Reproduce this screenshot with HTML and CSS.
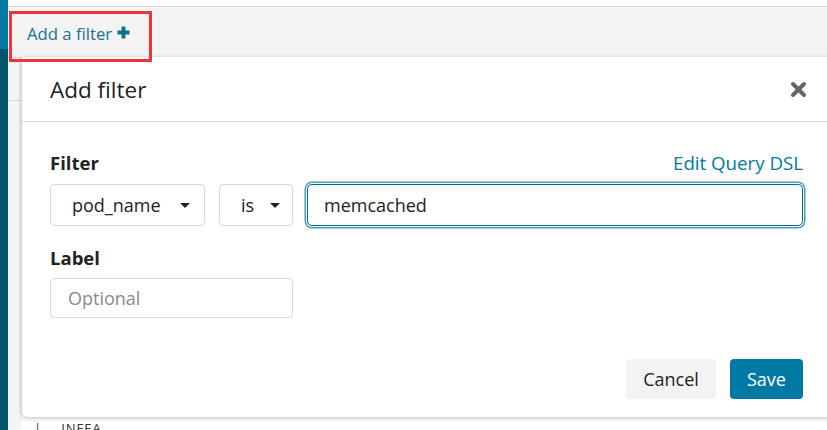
FILE: index.html
```html
<!DOCTYPE html>
<html>
<head>
<meta charset="utf-8">
<link rel="stylesheet" href="styles.css">
</head>
<body>
<div class="app">
  <div class="sidenav">
    <div class="sidenav-top"></div>
    <div class="sidenav-rest"></div>
  </div>
  <div class="main">
    <div class="topgap"></div>
    <div class="filterbar">
      <a class="add-filter">Add a filter
        <svg class="plus" width="13" height="13" viewBox="0 0 13 13"><path d="M6.5 0.5v12M0.5 6.5h12" stroke="currentColor" stroke-width="3.8"/></svg>
      </a>
    </div>
    <div class="content">
      <div class="leftcol"><div class="leftcol-head"></div></div>
      <div class="rest">
        <div class="bottom-row"><span class="tick">|</span><span class="frag">INFEA</span></div>
      </div>
    </div>

    <div class="modal">
      <div class="modal-header">
        <div class="modal-title">Add filter</div>
        <svg class="close" width="17" height="17" viewBox="0 0 17 17"><path d="M3 3l11 11M14 3L3 14" stroke="#666" stroke-width="4" stroke-linecap="round"/></svg>
      </div>
      <div class="modal-body">
        <div class="label-row">
          <span class="field-label">Filter</span>
          <a class="dsl-link">Edit Query DSL</a>
        </div>
        <div class="controls">
          <div class="select select-field"><span>pod_name</span><span class="caret"></span></div>
          <div class="select select-op"><span>is</span><span class="caret"></span></div>
          <div class="input input-focus">memcached</div>
        </div>
        <div class="label-row label2">
          <span class="field-label">Label</span>
        </div>
        <div class="input input-label placeholder">Optional</div>
      </div>
      <div class="modal-footer">
        <button class="btn btn-cancel">Cancel</button>
        <button class="btn btn-save">Save</button>
      </div>
    </div>
    <div class="highlight"></div>
  </div>
</div>
</body>
</html>
```
FILE: styles.css
```css
* { box-sizing: border-box; }
html, body {
  margin: 0;
  height: 430px;
  overflow: hidden;
  font-family: "Open Sans", "Liberation Sans", sans-serif;
  color: #222;
  background: #fff;
}
.app { display: flex; height: 430px; }
.sidenav { width: 8px; display: flex; flex-direction: column; }
.sidenav-top { height: 49px; background: #0079a5; }
.sidenav-rest { flex: 1; background: #005571; }
.main { flex: 1; position: relative; display: flex; flex-direction: column; }
.topgap { height: 6px; }
.filterbar {
  height: 52px;
  background: #f3f3f3;
  border-top: 1px solid #d9d9d9;
  border-bottom: 1px solid #d9d9d9;
  display: flex;
  align-items: center;
  padding: 2px 0 0 19px;
}
.add-filter {
  font-size: 16.7px;
  color: #1a7193;
  display: flex;
  align-items: center;
  gap: 5px;
}
.plus { color: #0a6f91; margin-top: -1px; }
.highlight {
  position: absolute;
  left: 1px;
  top: 11px;
  width: 143px;
  height: 51px;
  border: 3px solid #ee3438;
  z-index: 5;
}
.content { flex: 1; display: flex; }
.leftcol { width: 14px; background: #f5f5f5; }
.leftcol-head { height: 43px; border-bottom: 1px solid #d9d9d9; }
.rest { flex: 1; display: flex; flex-direction: column; justify-content: flex-end; }
.bottom-row { height: 8px; overflow: visible; padding-left: 12px; font-size: 13px; line-height: 13px; display: flex; gap: 20px; color: #333; }
.frag { letter-spacing: 1px; }

.modal {
  position: absolute;
  left: 14px;
  top: 57px;
  width: 809px;
  background: #fff;
  border-radius: 0 0 0 6px;
  box-shadow: -1px 1px 4px rgba(0,0,0,0.18), 0 2px 6px rgba(0,0,0,0.08);
}
.modal-header {
  height: 65px;
  border-bottom: 1px solid #d9d9d9;
  display: flex;
  align-items: center;
  justify-content: space-between;
  padding: 0 24px 0 28px;
}
.modal-title { font-size: 22.5px; color: #1f1f1f; }
.modal-body { padding: 29px 28px 0 28px; }
.label-row {
  display: flex;
  justify-content: space-between;
  align-items: center;
  height: 22px;
}
.field-label { font-weight: 700; font-size: 18.5px; color: #222; }
.dsl-link { font-size: 18.7px; color: #0079a5; }
.controls { display: flex; gap: 14px; margin-top: 11px; }
.select {
  height: 42px;
  border: 1px solid #d9d9d9;
  border-radius: 4px;
  display: flex;
  align-items: center;
  justify-content: space-between;
  font-size: 18px;
  padding: 0 14px 0 21px;
}
.select-field { width: 155px; }
.select-op { width: 74px; padding-left: 21px; padding-right: 12px; }
.caret {
  width: 0; height: 0;
  border-left: 5px solid transparent;
  border-right: 5px solid transparent;
  border-top: 5px solid #222;
}
.input {
  height: 42px;
  border: 1px solid #d9d9d9;
  border-radius: 4px;
  display: flex;
  align-items: center;
  font-size: 18px;
  padding: 0 16px;
}
.input-focus {
  flex: 1;
  border-color: #006e8a;
  box-shadow: 0 0 0 1px #fff, 0 0 0 2.5px #4b9dbd;
  border-radius: 5px;
}
.label2 { margin-top: 20px; }
.input-label { width: 243px; height: 40px; margin-top: 10px; padding-left: 17px; }
.placeholder { color: #8a8a8a; }
.modal-footer {
  display: flex;
  justify-content: flex-end;
  gap: 14px;
  padding: 41px 28px 18px 0;
}
.btn {
  height: 40px;
  border: none;
  border-radius: 4px;
  font-family: "Open Sans", "Liberation Sans", sans-serif;
  font-size: 18px;
  padding: 0 16px;
}
.btn-cancel { width: 90px; background: #f3f3f3; color: #222; }
.btn-save { width: 73px; background: #0079a5; color: #fff; }
```
